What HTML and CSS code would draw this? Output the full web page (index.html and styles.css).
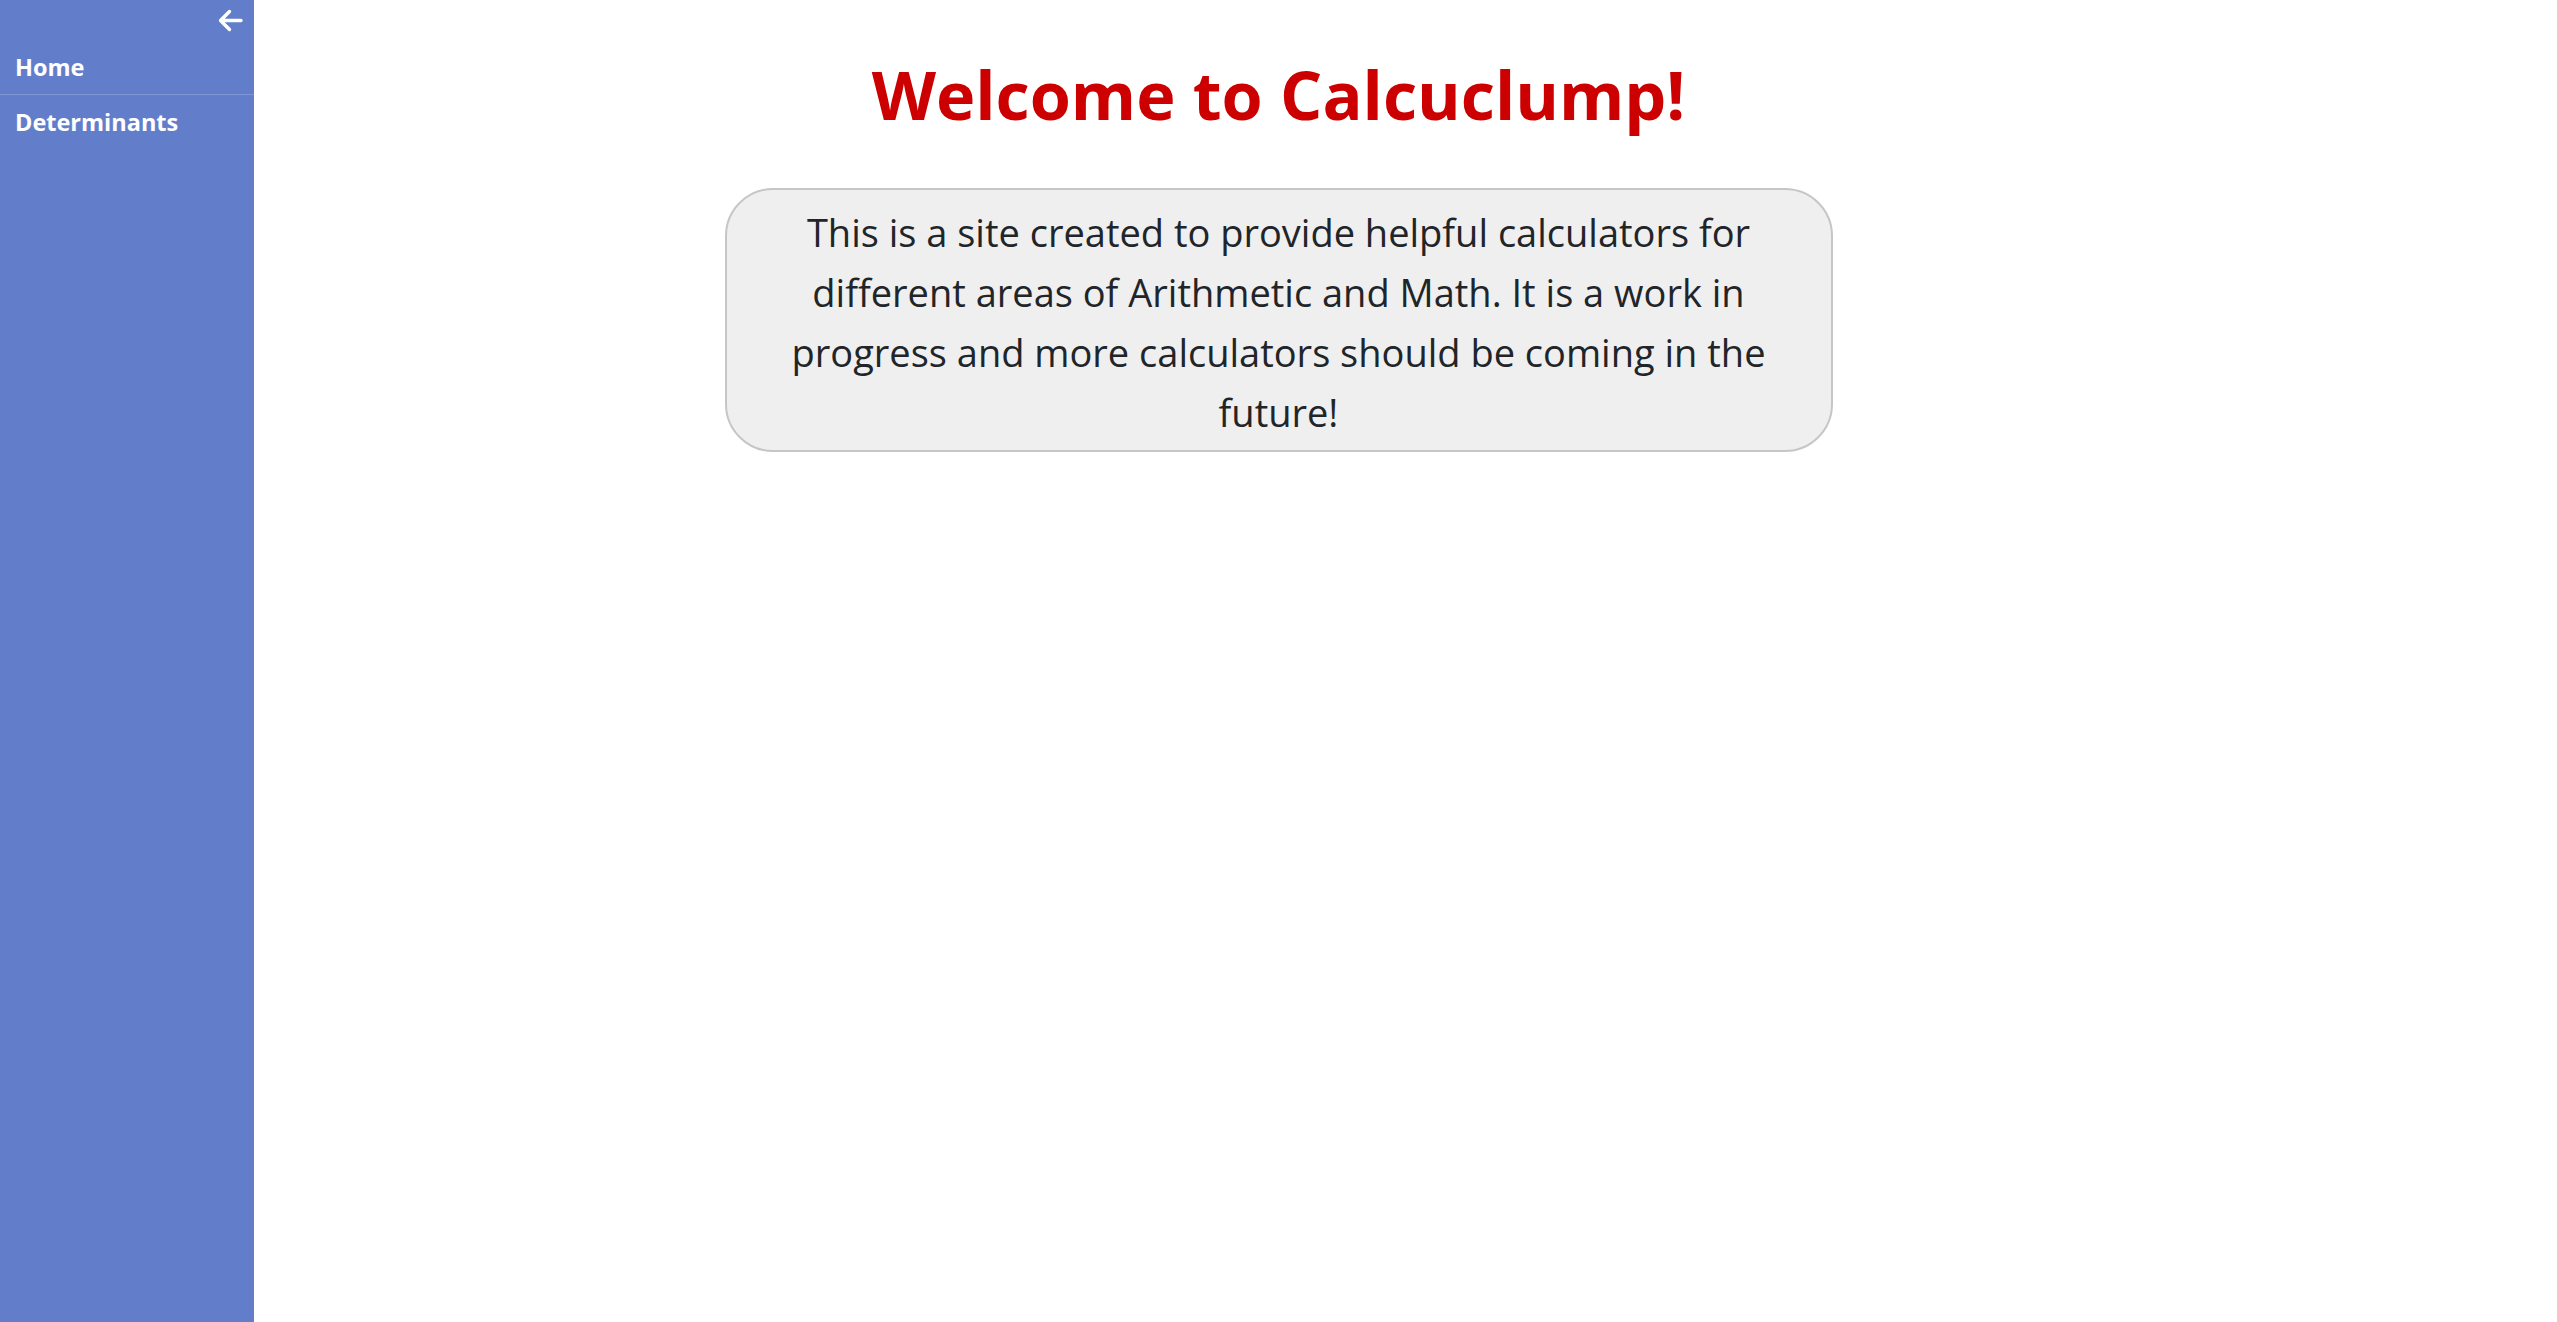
FILE: index.html
```html
<!DOCTYPE html>
<html lang="en">
<head>
<meta charset="utf-8">
<title>Calcuclump</title>
<link rel="stylesheet" href="styles.css">
</head>
<body>
<nav class="sidebar">
  <div class="sidebar-top">
    <button class="collapse-btn" aria-label="Collapse menu">
      <svg width="25" height="23" viewBox="0 0 25 23" fill="none" stroke="#fff" stroke-width="3.4" stroke-linecap="round" stroke-linejoin="round">
        <path d="M23 11.5H3M11.5 2.5L2.5 11.5l9 9"/>
      </svg>
    </button>
  </div>
  <a class="nav-link" href="#">Home</a>
  <a class="nav-link" href="#">Determinants</a>
</nav>
<main class="main">
  <h1 class="title">Welcome to Calcuclump!</h1>
  <div class="intro">
    <p>This is a site created to provide helpful calculators for different areas of Arithmetic and Math. It is a work in progress and more calculators should be coming in the future!</p>
  </div>
</main>
</body>
</html>
```

FILE: styles.css
```css
html, body {
  margin: 0;
  padding: 0;
  background: #ffffff;
}

body {
  font-family: "Open Sans", "Noto Sans", "Liberation Sans", sans-serif;
  color: #212529;
}

.sidebar {
  position: fixed;
  top: 0;
  left: 0;
  bottom: 0;
  width: 254px;
  background: #627ecb;
  display: flex;
  flex-direction: column;
}

.sidebar-top {
  height: 40px;
  display: flex;
  justify-content: flex-end;
  align-items: flex-start;
  padding-right: 11px;
  padding-top: 1px;
  box-sizing: border-box;
}

.collapse-btn {
  background: none;
  border: 0;
  padding: 8px 0 0;
  display: flex;
  cursor: pointer;
}

.nav-link {
  display: block;
  padding: 10px 15px 9px;
  color: #ffffff;
  font-weight: 700;
  font-size: 23.5px;
  line-height: 35px;
  text-decoration: none;
  border-bottom: 1px solid #7f97d6;
}

.nav-link:last-child {
  border-bottom: 0;
}

.main {
  display: flex;
  flex-direction: column;
  align-items: center;
  text-align: center;
}

.title {
  margin: 51px 0 51px;
  font-size: 66.5px;
  line-height: 86px;
  font-weight: 700;
  color: #cc0000;
}

.intro {
  width: 1104px;
  box-sizing: content-box;
  background: #efefef;
  border: 2px solid #c6c6c6;
  border-radius: 48px;
  padding: 12px 0 8px;
}

.intro p {
  margin: 0 auto;
  max-width: 1010px;
  font-size: 38px;
  line-height: 60px;
}
```
